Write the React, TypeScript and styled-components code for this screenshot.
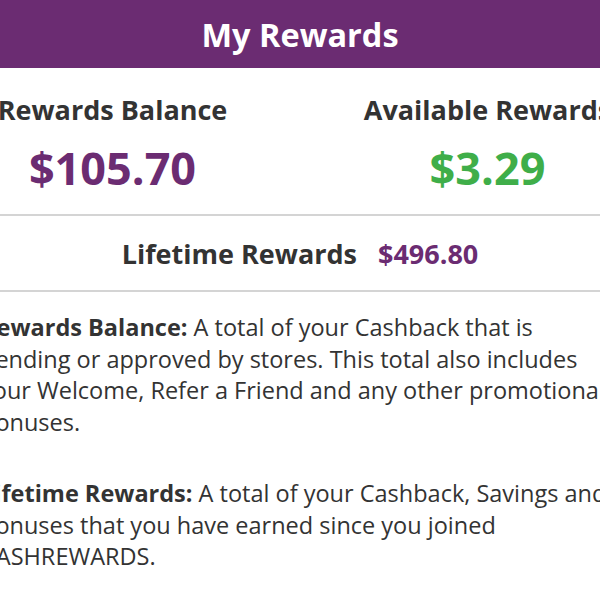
import React from "react";
import styled, { createGlobalStyle } from "styled-components";

const Global = createGlobalStyle`
  html, body { margin: 0; padding: 0; background: #fff; overflow: hidden; }
  body { font-family: "Open Sans", "Liberation Sans", sans-serif; color: #333; }
`;

const Page = styled.div`
  width: 750px;
  margin-left: -75px;
`;

const Header = styled.header`
  background: #6b2c72;
  height: 68px;
  display: flex;
  align-items: center;
  justify-content: center;
`;

const Title = styled.h1`
  margin: 0;
  color: #fff;
  font-size: 32.5px;
  font-weight: 700;
`;

const Stats = styled.section`
  display: grid;
  grid-template-columns: 1fr 1fr;
  padding: 24px 0 16px;
  border-bottom: 2px solid #d4d4d4;
`;

const Stat = styled.div`
  display: flex;
  flex-direction: column;
  align-items: center;
`;

const StatLabel = styled.div`
  font-size: 27px;
  font-weight: 700;
  color: #333;
  line-height: 36px;
  white-space: nowrap;
`;

const StatValue = styled.div<{ $tone: "purple" | "green" }>`
  font-size: 45px;
  font-weight: 700;
  line-height: 60px;
  margin-top: 10px;
  color: ${(p) => (p.$tone === "green" ? "#3fae49" : "#6b2c72")};
`;

const Lifetime = styled.section`
  display: flex;
  justify-content: center;
  align-items: center;
  gap: 21px;
  height: 74px;
  border-bottom: 2px solid #d4d4d4;
`;

const LifetimeLabel = styled.span`
  font-size: 27px;
  font-weight: 700;
  color: #333;
`;

const LifetimeValue = styled.span`
  font-size: 27px;
  font-weight: 700;
  color: #6b2c72;
`;

const Notes = styled.section`
  padding: 20px 61px 0 56px;
`;

const Note = styled.p`
  margin: 0 0 40px;
  font-size: 23.5px;
  line-height: 31.5px;
  color: #333;
  b { font-weight: 700; }
`;

export default function App() {
  return (
    <>
      <Global />
      <Page>
        <Header>
          <Title>My Rewards</Title>
        </Header>
        <Stats>
          <Stat>
            <StatLabel>Rewards Balance</StatLabel>
            <StatValue $tone="purple">$105.70</StatValue>
          </Stat>
          <Stat>
            <StatLabel>Available Rewards</StatLabel>
            <StatValue $tone="green">$3.29</StatValue>
          </Stat>
        </Stats>
        <Lifetime>
          <LifetimeLabel>Lifetime Rewards</LifetimeLabel>
          <LifetimeValue>$496.80</LifetimeValue>
        </Lifetime>
        <Notes>
          <Note>
            <b>Rewards Balance:</b> A total of your Cashback that is pending or approved by stores. This total also
            includes your Welcome, Refer a Friend and any other promotional bonuses.
          </Note>
          <Note>
            <b>Lifetime Rewards:</b> A total of your Cashback, Savings and bonuses that you have earned since you
            joined CASHREWARDS.
          </Note>
        </Notes>
      </Page>
    </>
  );
}
